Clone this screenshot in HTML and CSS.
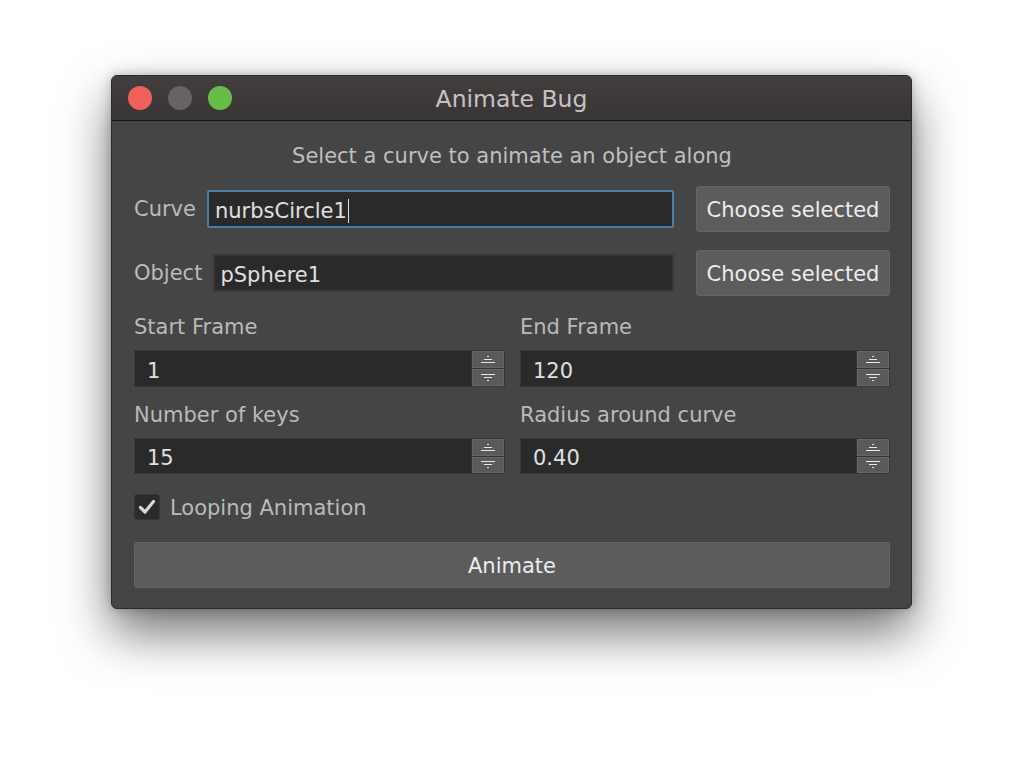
FILE: index.html
```html
<!DOCTYPE html>
<html>
<head>
<meta charset="utf-8">
<link rel="stylesheet" href="styles.css">
</head>
<body>
<div class="window">
  <div class="titlebar">
    <div class="lights">
      <span class="light red"></span>
      <span class="light gray"></span>
      <span class="light green"></span>
    </div>
    <div class="title">Animate Bug</div>
  </div>
  <div class="content">
    <div class="subtitle">Select a curve to animate an object along</div>
    <div class="pick-row">
      <span class="label">Curve</span>
      <div class="text-input focused">nurbsCircle1<span class="caret"></span></div>
      <button class="btn">Choose selected</button>
    </div>
    <div class="pick-row second">
      <span class="label">Object</span>
      <div class="text-input">pSphere1</div>
      <button class="btn">Choose selected</button>
    </div>
    <div class="grid">
      <div class="field">
        <div class="label">Start Frame</div>
        <div class="spin">
          <div class="spin-value">1</div>
          <div class="spin-btns">
            <span class="sb"><svg width="14" height="7" viewBox="0 0 14 7"><rect x="6" y="0" width="2" height="1"/><rect x="3" y="3" width="8" height="1"/><rect x="0" y="6" width="14" height="1"/></svg></span>
            <span class="sb"><svg width="14" height="7" viewBox="0 0 14 7"><rect x="0" y="0" width="14" height="1"/><rect x="3" y="3" width="8" height="1"/><rect x="6" y="6" width="2" height="1"/></svg></span>
          </div>
        </div>
      </div>
      <div class="field">
        <div class="label">End Frame</div>
        <div class="spin">
          <div class="spin-value">120</div>
          <div class="spin-btns">
            <span class="sb"><svg width="14" height="7" viewBox="0 0 14 7"><rect x="6" y="0" width="2" height="1"/><rect x="3" y="3" width="8" height="1"/><rect x="0" y="6" width="14" height="1"/></svg></span>
            <span class="sb"><svg width="14" height="7" viewBox="0 0 14 7"><rect x="0" y="0" width="14" height="1"/><rect x="3" y="3" width="8" height="1"/><rect x="6" y="6" width="2" height="1"/></svg></span>
          </div>
        </div>
      </div>
      <div class="field">
        <div class="label">Number of keys</div>
        <div class="spin short">
          <div class="spin-value">15</div>
          <div class="spin-btns">
            <span class="sb"><svg width="14" height="7" viewBox="0 0 14 7"><rect x="6" y="0" width="2" height="1"/><rect x="3" y="3" width="8" height="1"/><rect x="0" y="6" width="14" height="1"/></svg></span>
            <span class="sb"><svg width="14" height="7" viewBox="0 0 14 7"><rect x="0" y="0" width="14" height="1"/><rect x="3" y="3" width="8" height="1"/><rect x="6" y="6" width="2" height="1"/></svg></span>
          </div>
        </div>
      </div>
      <div class="field">
        <div class="label">Radius around curve</div>
        <div class="spin short">
          <div class="spin-value">0.40</div>
          <div class="spin-btns">
            <span class="sb"><svg width="14" height="7" viewBox="0 0 14 7"><rect x="6" y="0" width="2" height="1"/><rect x="3" y="3" width="8" height="1"/><rect x="0" y="6" width="14" height="1"/></svg></span>
            <span class="sb"><svg width="14" height="7" viewBox="0 0 14 7"><rect x="0" y="0" width="14" height="1"/><rect x="3" y="3" width="8" height="1"/><rect x="6" y="6" width="2" height="1"/></svg></span>
          </div>
        </div>
      </div>
    </div>
    <div class="check-row">
      <span class="checkbox"><svg width="18" height="16" viewBox="0 0 18 16"><path d="M2.5 8.5 L7 13 L15.5 2.5" fill="none" stroke="#d8d8d8" stroke-width="3.2" stroke-linecap="round" stroke-linejoin="round"/></svg></span>
      <span class="check-label">Looping Animation</span>
    </div>
    <button class="btn wide">Animate</button>
  </div>
</div>
</body>
</html>
```

FILE: styles.css
```css
html, body {
  margin: 0;
  padding: 0;
  background: #ffffff;
}
body {
  width: 1024px;
  height: 758px;
  overflow: hidden;
  font-family: "DejaVu Sans", "Liberation Sans", sans-serif;
}
.window {
  margin: 75px 0 0 111px;
  width: 801px;
  height: 534px;
  box-sizing: border-box;
  border: 1px solid #2a2a2a;
  border-radius: 6px;
  background: #454545;
  box-shadow: 0 24px 50px rgba(0,0,0,0.55), 0 0 12px rgba(0,0,0,0.25);
  overflow: hidden;
  display: flex;
  flex-direction: column;
}
.titlebar {
  height: 44px;
  background: linear-gradient(#433e3e, #3a3535);
  border-bottom: 1px solid #151313;
  display: flex;
  align-items: center;
  position: relative;
  flex-shrink: 0;
}
.lights {
  display: flex;
  gap: 16px;
  padding-left: 16px;
}
.light {
  width: 24px;
  height: 24px;
  border-radius: 50%;
  display: block;
}
.red { background: #ee6158; }
.gray { background: #676365; }
.green { background: #63bd47; }
.title {
  position: absolute;
  left: 0;
  right: 0;
  top: 11px;
  text-align: center;
  color: #c6c2c2;
  font-size: 23.5px;
  line-height: 24px;
}
.content {
  padding: 23px 21px 0 22px;
  display: flex;
  flex-direction: column;
}
.subtitle {
  text-align: center;
  color: #bfbfbf;
  font-size: 21px;
  line-height: 24px;
}
.label {
  color: #bababa;
  font-size: 21px;
  line-height: 24px;
}
.pick-row {
  margin-top: 18px;
  display: grid;
  grid-template-columns: auto 1fr 205px;
  align-items: center;
  column-gap: 11px;
  height: 46px;
}
.pick-row.second { margin-top: 18px; }
.pick-row .btn { margin-left: 11px; height: 46px; }
.text-input {
  height: 38px;
  box-sizing: border-box;
  background: #2a2a2a;
  border: 2px solid #383838;
  border-radius: 2px;
  color: #e0e0e0;
  font-size: 21px;
  line-height: 34px;
  padding: 3px 0 0 5px;
  display: flex;
  align-items: center;
}
.text-input.focused {
  border: 2px solid #4d7da3;
  padding-left: 6px;
}
.caret {
  display: inline-block;
  width: 1px;
  height: 24px;
  background: #e0e0e0;
  margin-left: 1px;
}
.btn {
  background: #5c5c5c;
  border: 1px solid #646464;
  border-radius: 3px;
  color: #ededed;
  font-family: inherit;
  font-size: 21px;
  padding: 2px 0 0 0;
}
.grid {
  margin-top: 19px;
  display: grid;
  grid-template-columns: 371px 1fr;
  column-gap: 15px;
  row-gap: 16px;
}
.field .label { height: 24px; }
.spin {
  margin-top: 11px;
  height: 37px;
  display: flex;
  box-sizing: border-box;
  border: 1px solid #383838;
  background: #2a2a2a;
}
.spin.short { height: 36px; }
.spin-value {
  flex: 1;
  color: #e0e0e0;
  font-size: 21px;
  display: flex;
  align-items: center;
  padding: 4px 0 0 12px;
}
.spin-btns {
  width: 32px;
  display: flex;
  flex-direction: column;
  gap: 1px;
  background: #333;
  border-left: 1px solid #333;
}
.sb {
  flex: 1;
  background: #5a5a5a;
  border: 1px solid #666;
  display: flex;
  align-items: center;
  justify-content: center;
}
.sb svg { fill: #e8e8e8; display: block; }
.check-row {
  margin-top: 20px;
  display: flex;
  align-items: center;
  gap: 10px;
  height: 26px;
}
.checkbox {
  width: 26px;
  height: 26px;
  box-sizing: border-box;
  background: #2b2b2b;
  border: 1px solid #363636;
  border-radius: 3px;
  display: flex;
  align-items: center;
  justify-content: center;
}
.check-label {
  color: #bababa;
  font-size: 21px;
  padding-top: 2px;
}
.btn.wide {
  margin-top: 22px;
  height: 46px;
  width: 100%;
}
```
